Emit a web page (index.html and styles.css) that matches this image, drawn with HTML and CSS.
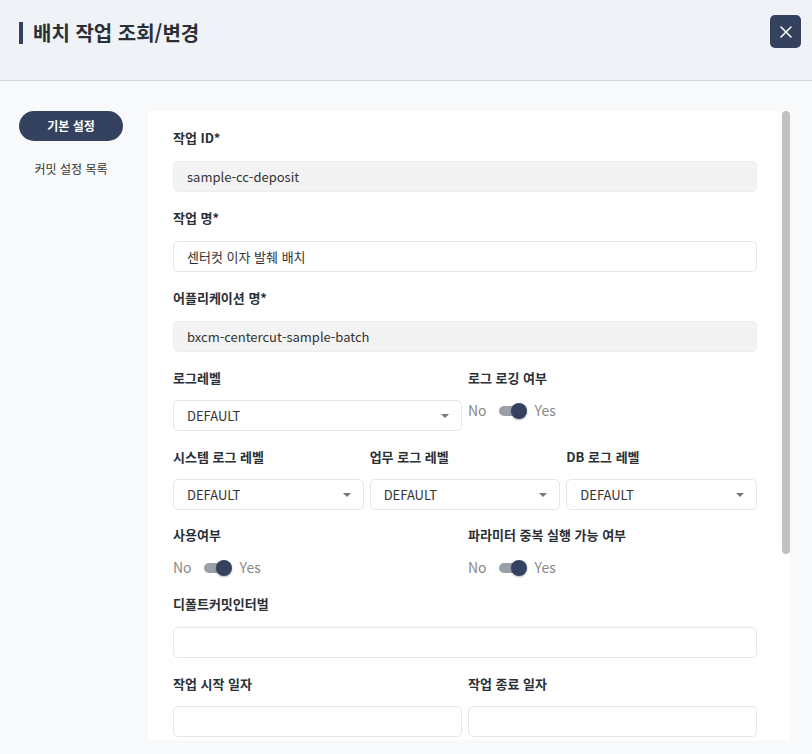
FILE: index.html
```html
<!DOCTYPE html>
<html lang="ko">
<head>
<meta charset="utf-8">
<title>배치 작업 조회/변경</title>
<link rel="stylesheet" href="styles.css">
</head>
<body>
<header class="header">
  <h1 class="title">배치 작업 조회/변경</h1>
  <button class="close" type="button" aria-label="닫기">
    <svg width="14" height="14" viewBox="0 0 14 14"><path d="M2 2 L12 12 M12 2 L2 12" stroke="#fff" stroke-width="1.5" stroke-linecap="round"/></svg>
  </button>
</header>
<div class="body">
  <nav class="nav">
    <div class="nav-item active">기본 설정</div>
    <div class="nav-item">커밋 설정 목록</div>
  </nav>
  <main class="panel">
    <div class="panel-content">
      <div class="field">
        <div class="label">작업 ID*</div>
        <div class="input disabled">sample-cc-deposit</div>
      </div>
      <div class="field">
        <div class="label">작업 명*</div>
        <div class="input">센터컷 이자 발췌 배치</div>
      </div>
      <div class="field">
        <div class="label">어플리케이션 명*</div>
        <div class="input disabled">bxcm-centercut-sample-batch</div>
      </div>
      <div class="row two">
        <div class="field">
          <div class="label">로그레벨</div>
          <div class="input select">DEFAULT<span class="caret"></span></div>
        </div>
        <div class="field">
          <div class="label">로그 로깅 여부</div>
          <div class="toggle"><span class="opt">No</span><span class="switch"><span class="knob"></span></span><span class="opt">Yes</span></div>
        </div>
      </div>
      <div class="row three">
        <div class="field">
          <div class="label">시스템 로그 레벨</div>
          <div class="input select">DEFAULT<span class="caret"></span></div>
        </div>
        <div class="field">
          <div class="label">업무 로그 레벨</div>
          <div class="input select">DEFAULT<span class="caret"></span></div>
        </div>
        <div class="field">
          <div class="label">DB 로그 레벨</div>
          <div class="input select">DEFAULT<span class="caret"></span></div>
        </div>
      </div>
      <div class="row two toggles">
        <div class="field">
          <div class="label">사용여부</div>
          <div class="toggle"><span class="opt">No</span><span class="switch"><span class="knob"></span></span><span class="opt">Yes</span></div>
        </div>
        <div class="field">
          <div class="label">파라미터 중복 실행 가능 여부</div>
          <div class="toggle"><span class="opt">No</span><span class="switch"><span class="knob"></span></span><span class="opt">Yes</span></div>
        </div>
      </div>
      <div class="field">
        <div class="label">디폴트커밋인터벌</div>
        <div class="input"></div>
      </div>
      <div class="row two">
        <div class="field">
          <div class="label">작업 시작 일자</div>
          <div class="input"></div>
        </div>
        <div class="field">
          <div class="label">작업 종료 일자</div>
          <div class="input"></div>
        </div>
      </div>
    </div>
    <div class="scrollbar"><div class="thumb"></div></div>
  </main>
</div>
</body>
</html>
```
FILE: styles.css
```css
html, body {
  margin: 0;
  padding: 0;
}
body {
  width: 812px;
  height: 754px;
  overflow: hidden;
  background: #f8f9fb;
  font-family: "Noto Sans CJK KR", "Noto Sans", sans-serif;
  color: #333;
  display: flex;
  flex-direction: column;
}
.header {
  height: 81px;
  flex: 0 0 81px;
  box-sizing: border-box;
  background: #eff3f7;
  border-bottom: 1px solid #cdd5dc;
  display: flex;
  align-items: flex-start;
  justify-content: space-between;
  padding: 15px 11px 0 19px;
}
.title {
  margin: 7px 0 0 0;
  font-size: 20px;
  font-weight: 700;
  line-height: 24px;
  color: #2b2f36;
  border-left: 4px solid #344260;
  padding-left: 10px;
  height: 22px;
  display: flex;
  align-items: center;
}
.close {
  width: 31px;
  height: 33px;
  border: 0;
  border-radius: 5px;
  background: #344260;
  display: flex;
  align-items: center;
  justify-content: center;
  padding: 0;
}
.body {
  flex: 1;
  display: flex;
  padding: 30px 22px 14px 19px;
  min-height: 0;
}
.nav {
  width: 104px;
  flex: 0 0 104px;
  margin-right: 25px;
  display: flex;
  flex-direction: column;
  gap: 13px;
}
.nav-item {
  height: 30px;
  line-height: 30px;
  text-align: center;
  font-size: 12px;
  color: #333;
  border-radius: 15px;
}
.nav-item.active {
  background: #344260;
  color: #fff;
  font-weight: 700;
}
.panel {
  flex: 1;
  background: #fff;
  display: flex;
  min-width: 0;
  overflow: hidden;
}
.panel-content {
  flex: 1;
  min-width: 0;
  padding: 17px 25px 0 25px;
  overflow: hidden;
}
.scrollbar {
  width: 8px;
  flex: 0 0 8px;
}
.thumb {
  height: 443px;
  background: #c1c1c1;
  border-radius: 4px;
}
.field {
  margin-bottom: 16px;
  min-width: 0;
}
.row .field {
  margin-bottom: 0;
}
.row {
  display: grid;
  gap: 6px;
  margin-bottom: 16px;
  align-items: start;
}
.row.two {
  grid-template-columns: 1fr 1fr;
}
.row.three {
  grid-template-columns: 1fr 1fr 1fr;
  margin-bottom: 15px;
}
.row.toggles {
  margin-bottom: 17px;
}
.label {
  font-size: 13px;
  font-weight: 700;
  line-height: 20px;
  height: 20px;
  margin-bottom: 13px;
  color: #2b2f36;
  white-space: nowrap;
}
.row .label {
  margin-bottom: 12px;
}
.input {
  height: 31px;
  box-sizing: border-box;
  border: 1px solid #e6e6e6;
  border-radius: 5px;
  background: #fff;
  font-size: 13px;
  line-height: 29px;
  padding: 0 13px;
  color: #333;
  white-space: nowrap;
  overflow: hidden;
}
.input.disabled {
  background: #f3f3f3;
  border-color: #eeeeee;
}
.input.select {
  position: relative;
}
.caret {
  position: absolute;
  right: 12px;
  top: 13px;
  width: 0;
  height: 0;
  border-left: 4px solid transparent;
  border-right: 4px solid transparent;
  border-top: 4px solid #777;
}
.toggle {
  height: 20px;
  display: flex;
  align-items: center;
  font-size: 14px;
  color: #888;
}
.switch {
  position: relative;
  width: 22px;
  height: 10px;
  background: #9aa0aa;
  border-radius: 5px;
  margin: 0 14px 0 12px;
  top: 1px;
}
.knob {
  position: absolute;
  right: -6px;
  top: -3px;
  width: 16px;
  height: 16px;
  border-radius: 50%;
  background: #344260;
  box-shadow: 0 1px 2px rgba(0,0,0,0.3);
}
```
